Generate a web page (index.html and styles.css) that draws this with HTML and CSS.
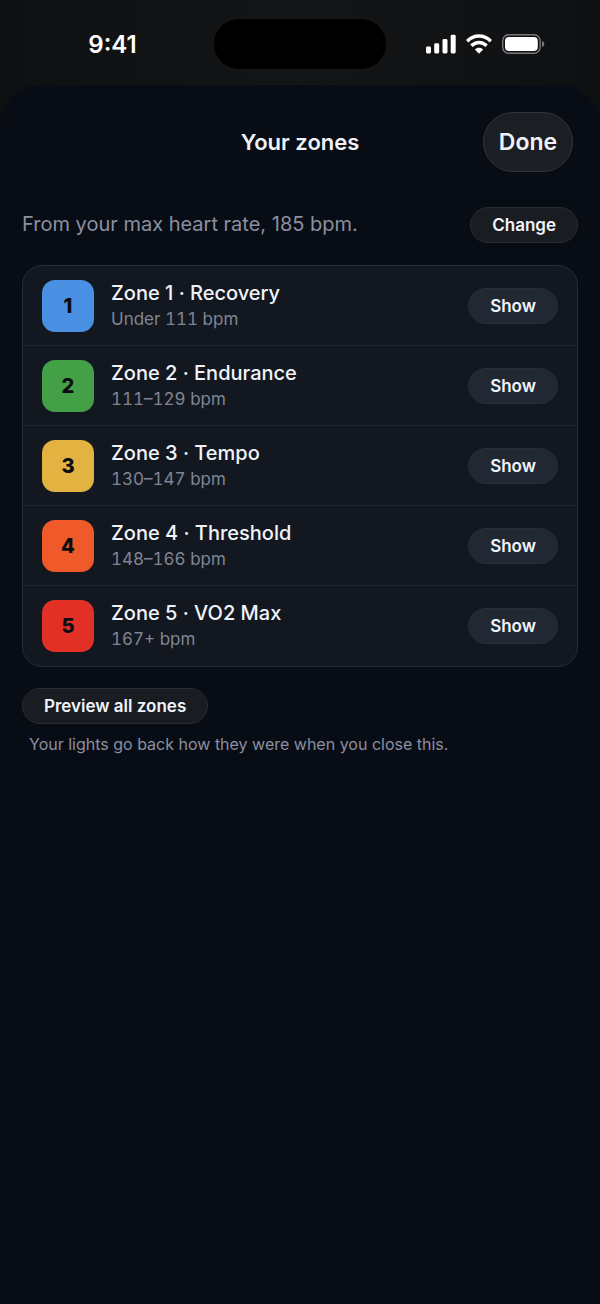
FILE: index.html
```
<!DOCTYPE html>
<html lang="en">
<head>
  <meta charset="UTF-8">
  <meta name="viewport" content="width=device-width, initial-scale=1.0">
  <title>Your zones</title>
  <link rel="stylesheet" href="styles.css">
</head>
<body>
  <div class="status-bar">
    <span class="time">9:41</span>
    <div class="island"></div>
    <div class="status-icons">
      <svg width="30" height="20" viewBox="0 0 30 20" fill="#fff">
        <rect x="0" y="12.5" width="5" height="7" rx="1.4"/>
        <rect x="8.2" y="9.3" width="5" height="10.2" rx="1.4"/>
        <rect x="16.5" y="5" width="5" height="14.5" rx="1.4"/>
        <rect x="24.7" y="0.8" width="5" height="18.7" rx="1.4"/>
      </svg>
      <svg width="26" height="20" viewBox="0 0 26 20" fill="none" stroke="#fff" stroke-width="3.5">
        <path d="M1.2 7.2C7.8 0.4 18.2 0.4 24.8 7.2"/>
        <path d="M5.4 11.8C9.7 7.4 16.3 7.4 20.6 11.8"/>
        <path d="M13 19.8L8.9 15.6C11.2 13.2 14.8 13.2 17.1 15.6Z" fill="#fff" stroke="none"/>
      </svg>
      <svg width="43" height="20" viewBox="0 0 43 20">
        <rect x="0.7" y="0.7" width="37.4" height="18.6" rx="6" fill="none" stroke="#77797c" stroke-width="1.4"/>
        <rect x="3" y="3" width="32.8" height="14" rx="4" fill="#fff"/>
        <path d="M40 7C43 8 43 12 40 13Z" fill="#77797c"/>
      </svg>
    </div>
  </div>

  <main class="sheet">
    <header class="sheet-header">
      <h1>Your zones</h1>
      <button type="button" class="done">Done</button>
    </header>

    <div class="source">
      <p>From your max heart rate, 185 bpm.</p>
      <button type="button" class="pill">Change</button>
    </div>

    <ul class="zones">
      <li class="zone">
        <span class="badge blue">1</span>
        <div class="zone-text">
          <h2>Zone 1 · Recovery</h2>
          <p>Under 111 bpm</p>
        </div>
        <button type="button" class="pill show">Show</button>
      </li>
      <li class="zone">
        <span class="badge green">2</span>
        <div class="zone-text">
          <h2>Zone 2 · Endurance</h2>
          <p>111–129 bpm</p>
        </div>
        <button type="button" class="pill show">Show</button>
      </li>
      <li class="zone">
        <span class="badge yellow">3</span>
        <div class="zone-text">
          <h2>Zone 3 · Tempo</h2>
          <p>130–147 bpm</p>
        </div>
        <button type="button" class="pill show">Show</button>
      </li>
      <li class="zone">
        <span class="badge orange">4</span>
        <div class="zone-text">
          <h2>Zone 4 · Threshold</h2>
          <p>148–166 bpm</p>
        </div>
        <button type="button" class="pill show">Show</button>
      </li>
      <li class="zone">
        <span class="badge red">5</span>
        <div class="zone-text">
          <h2>Zone 5 · VO2 Max</h2>
          <p>167+ bpm</p>
        </div>
        <button type="button" class="pill show">Show</button>
      </li>
    </ul>

    <button type="button" class="pill">Preview all zones</button>
    <p class="note">Your lights go back how they were when you close this.</p>
  </main>
</body>
</html>
```
FILE: styles.css
```
* {
  box-sizing: border-box;
}
body {
  margin: 0;
  min-height: 100vh;
  display: flex;
  flex-direction: column;
  font-family: Inter, "Liberation Sans", sans-serif;
  color: #f0f3fa;
  background: linear-gradient(to right, #0e1012, #131517 50%, #0e1012);
}
h1, h2, p, ul {
  margin: 0;
  padding: 0;
}
button {
  font-family: inherit;
  color: inherit;
  cursor: pointer;
}

.status-bar {
  display: grid;
  grid-template-columns: 1fr 172px 1fr;
  align-items: center;
  height: 85px;
  padding-top: 3px;
  color: #fff;
}
.time {
  padding-left: 11px;
  text-align: center;
  font-size: 24px;
  font-weight: 600;
}
.island {
  height: 50px;
  border-radius: 25px;
  background: #000;
}
.status-icons {
  display: flex;
  align-items: center;
  gap: 10px;
  padding-left: 40px;
}

.sheet {
  flex: 1;
  padding: 27px 22px;
  border-radius: 40px 40px 0 0;
  background: #080c14;
}
.sheet-header {
  display: grid;
  grid-template-columns: 1fr auto 1fr;
  align-items: center;
  margin-right: 5px;
  margin-left: 5px;
}
.sheet-header h1 {
  grid-column: 2;
  font-size: 22px;
  font-weight: 600;
}
.done {
  justify-self: end;
  width: 90px;
  height: 60px;
  padding: 0;
  border: 1px solid #33373b;
  border-radius: 30px;
  background: #1b1e23;
  font-size: 23px;
  font-weight: 600;
}

.source {
  display: flex;
  justify-content: space-between;
  align-items: center;
  margin: 35px 0 22px;
}
.source p {
  font-size: 20px;
  line-height: 32px;
  padding-bottom: 2px;
  color: #8b90a0;
}
.pill {
  height: 36px;
  padding: 0 21px;
  border: 1px solid #272d33;
  border-radius: 18px;
  background: #191d21;
  font-size: 17px;
  font-weight: 600;
}
.pill.show {
  border-color: #272d37;
  background: #222833;
}

.zones {
  margin-bottom: 21px;
  border: 1px solid #252b36;
  border-radius: 20px;
  background: #131820;
  list-style: none;
}
.zone {
  display: flex;
  align-items: center;
  gap: 17px;
  height: 80px;
  padding: 0 19px;
  border-bottom: 1px solid #1f2530;
}
.zone:last-child {
  border-bottom: 0;
}
.badge {
  width: 52px;
  border-radius: 13px;
  text-align: center;
  font-size: 20px;
  font-weight: 800;
  line-height: 52px;
  color: #0a0c10;
}
.blue { background: #4a90e2; }
.green { background: #43a047; }
.yellow { background: #e2b340; }
.orange { background: #f05a2a; }
.red { background: #e33027; }

.zone-text {
  flex: 1;
}
.zone-text h2 {
  font-size: 20px;
  font-weight: 500;
  line-height: 26px;
}
.zone-text p {
  font-size: 17px;
  line-height: 26px;
  font-variant-numeric: tabular-nums;
  color: #7f8594;
}
.note {
  margin: 7px 7px 0;
  font-size: 16px;
  line-height: 26px;
  color: #8b90a0;
}
```
